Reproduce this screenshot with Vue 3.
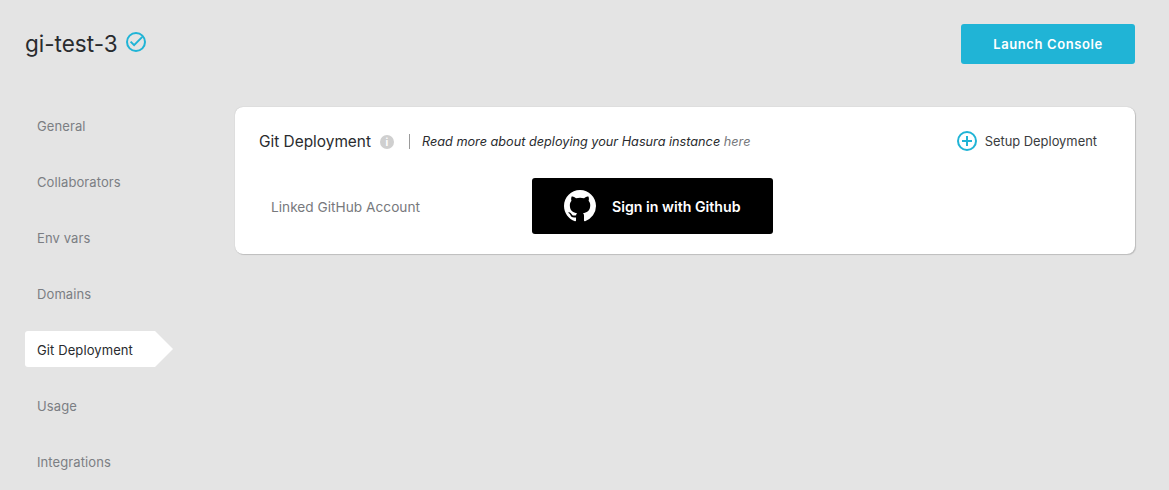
<template>
  <div class="page">
    <header class="top">
      <div class="project">
        <h1>gi-test-3</h1>
        <svg class="verified" width="20" height="20" viewBox="0 0 20 20" fill="none">
          <circle cx="10" cy="10" r="9" stroke="#20b4d6" stroke-width="2" />
          <path d="M4.6 9.6l3.5 3.5 8.2-8.2" stroke="#20b4d6" stroke-width="2" />
        </svg>
      </div>
      <button class="launch">Launch Console</button>
    </header>

    <div class="body">
      <nav class="side">
        <div
          v-for="item in navItems"
          :key="item"
          class="nav-item"
          :class="{ active: item === current }"
        >
          {{ item }}
        </div>
      </nav>

      <main class="card">
        <div class="card-head">
          <h2>Git Deployment</h2>
          <span class="info">i</span>
          <span class="divider"></span>
          <p class="note">
            Read more about deploying your Hasura instance <span class="here">here</span>
          </p>
          <div class="setup">
            <svg width="20" height="20" viewBox="0 0 20 20" fill="none">
              <circle cx="10" cy="10" r="9" stroke="#20b4d6" stroke-width="2" />
              <path d="M10 5v10M5 10h10" stroke="#20b4d6" stroke-width="2" />
            </svg>
            <span>Setup Deployment</span>
          </div>
        </div>
        <div class="card-row">
          <span class="row-label">Linked GitHub Account</span>
          <button class="github">
            <svg width="32" height="32" viewBox="0 0 16 16" fill="#fff">
              <path
                d="M8 0C3.58 0 0 3.58 0 8c0 3.54 2.29 6.53 5.47 7.59.4.07.55-.17.55-.38 0-.19-.01-.82-.01-1.49-2.01.37-2.53-.49-2.69-.94-.09-.23-.48-.94-.82-1.13-.28-.15-.68-.52-.01-.53.63-.01 1.08.58 1.23.82.72 1.21 1.87.87 2.33.66.07-.52.28-.87.51-1.07-1.78-.2-3.64-.89-3.64-3.95 0-.87.31-1.59.82-2.15-.08-.2-.36-1.02.08-2.12 0 0 .67-.21 2.2.82.64-.18 1.32-.27 2-.27s1.36.09 2 .27c1.53-1.04 2.2-.82 2.2-.82.44 1.1.16 1.92.08 2.12.51.56.82 1.27.82 2.15 0 3.07-1.87 3.75-3.65 3.95.29.25.54.73.54 1.48 0 1.07-.01 1.93-.01 2.2 0 .21.15.46.55.38A8.01 8.01 0 0 0 16 8c0-4.42-3.58-8-8-8z"
              />
            </svg>
            <span>Sign in with Github</span>
          </button>
        </div>
      </main>
    </div>
  </div>
</template>

<script setup>
const navItems = [
  'General',
  'Collaborators',
  'Env vars',
  'Domains',
  'Git Deployment',
  'Usage',
  'Integrations'
]
const current = 'Git Deployment'
</script>

<style>
html,
body {
  margin: 0;
  background: #e4e4e4;
}
</style>

<style scoped>
.page {
  height: 490px;
  overflow: hidden;
  box-sizing: border-box;
  padding: 24px 34px 0 25px;
  background: #e4e4e4;
  font-family: Inter, "Liberation Sans", sans-serif;
  color: #7b7e83;
}

.top {
  display: flex;
  justify-content: space-between;
  align-items: flex-start;
}

.project {
  display: flex;
  align-items: center;
  gap: 8px;
  height: 38px;
}

h1 {
  margin: 0;
  font-size: 22.5px;
  font-weight: 400;
  color: #292b2e;
}

.verified {
  margin-top: -2px;
}

.launch {
  width: 174px;
  height: 40px;
  border: none;
  border-radius: 3px;
  background: #20b4d6;
  color: #fff;
  font: 600 13px Inter, "Liberation Sans", sans-serif;
  letter-spacing: 0.6px;
}

.body {
  display: flex;
  align-items: flex-start;
  margin-top: 43px;
}

.side {
  width: 210px;
  flex: none;
  display: flex;
  flex-direction: column;
  gap: 20px;
}

.nav-item {
  width: 130px;
  height: 36px;
  box-sizing: border-box;
  padding-left: 12px;
  line-height: 38px;
  font-size: 13px;
  letter-spacing: 0.1px;
}

.nav-item.active {
  position: relative;
  background: #fff;
  color: #292b2e;
  border-radius: 3px 0 0 3px;
}

.nav-item.active::after {
  content: "";
  position: absolute;
  left: 130px;
  top: 0;
  border-left: 18px solid #fff;
  border-top: 18px solid transparent;
  border-bottom: 18px solid transparent;
}

.card {
  flex: 1;
  height: 147px;
  box-sizing: border-box;
  padding: 24px 38px 0 24px;
  background: #fff;
  border-radius: 8px;
  box-shadow: 0 0 1px rgba(0, 0, 0, 0.25), 1px 1px 1px rgba(0, 0, 0, 0.15);
}

.card-head {
  display: flex;
  align-items: center;
  height: 20px;
}

h2 {
  margin: 0;
  font-size: 15.4px;
  font-weight: 400;
  color: #292b2e;
}

.info {
  width: 14px;
  height: 14px;
  margin: 2px 0 0 9px;
  border-radius: 50%;
  background: #cfcfcf;
  color: #fff;
  font-size: 10px;
  font-weight: 700;
  line-height: 14px;
  text-align: center;
}

.divider {
  width: 1px;
  height: 15px;
  margin: 0 12px 0 15px;
  background: #9a9a9a;
}

.note {
  margin: 0;
  font-size: 12.7px;
  font-style: italic;
  color: #292b2e;
}

.here {
  color: #77797d;
}

.setup {
  display: flex;
  align-items: center;
  gap: 8px;
  margin-left: auto;
  font-size: 12.9px;
  color: #3a3c40;
}

.card-row {
  display: flex;
  align-items: center;
  margin-top: 27px;
  padding-left: 12px;
}

.row-label {
  width: 261px;
  margin-top: 2px;
  font-size: 13.7px;
  color: #77797d;
}

.github {
  display: flex;
  align-items: center;
  gap: 16px;
  width: 241px;
  height: 56px;
  padding: 0 0 0 32px;
  border: none;
  border-radius: 3px;
  background: #000;
  color: #fff;
  font: 600 14.2px Inter, "Liberation Sans", sans-serif;
}
</style>
